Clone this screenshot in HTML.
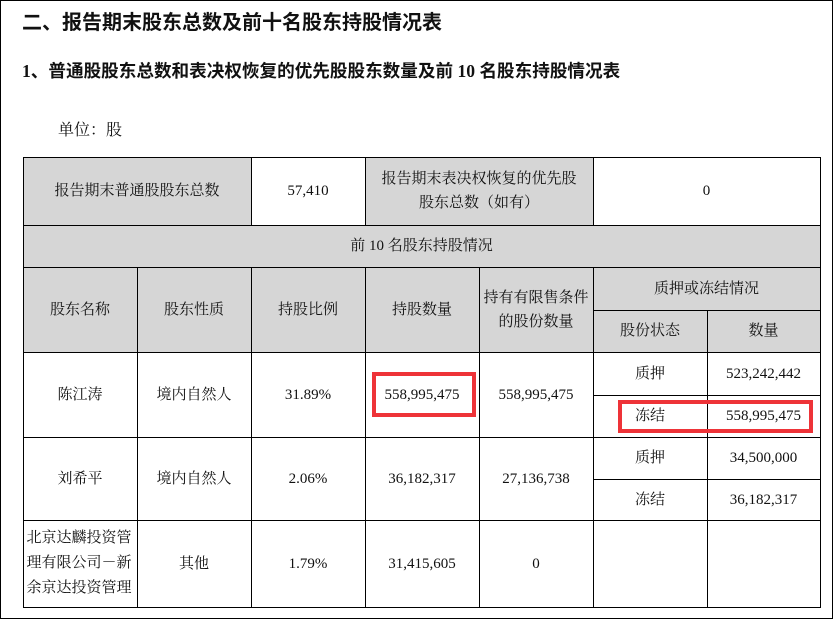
<!DOCTYPE html>
<html><head><meta charset="utf-8"><style>
body{margin:0;width:833px;height:619px;background:#fff;position:relative;overflow:hidden;font-family:"Liberation Serif","Noto Serif CJK SC",serif;color:#111}
.frame{position:absolute;left:0;top:0;width:831px;height:617px;border:1px solid #000}
.c{position:absolute;box-sizing:border-box;border:1px solid #000;display:flex;align-items:center;justify-content:center;text-align:center;font-size:15px;line-height:24px;margin:-0.5px}
.g{background:#d6d6d6}
.t{position:absolute;white-space:nowrap}
.red{position:absolute;border:4px solid #ee3338;box-sizing:border-box}
</style></head><body>
<div class="frame"></div>
<div class="t" style="left:22px;top:6px;font-size:20px;font-weight:bold;font-family:'Liberation Sans','Noto Sans CJK SC',sans-serif">二、报告期末股东总数及前十名股东持股情况表</div>
<div class="t" style="left:22px;top:58px;font-size:17.6px;font-weight:bold;font-family:'Liberation Serif','Noto Sans CJK SC',serif">1、普通股股东总数和表决权恢复的优先股股东数量及前 10 名股东持股情况表</div>
<div class="t" style="left:58px;top:117px;font-size:16px">单位：股</div>

<div class="c g" style="left:23px;top:157px;width:229px;height:69px">报告期末普通股股东总数</div>
<div class="c" style="left:251px;top:157px;width:115px;height:69px">57,410</div>
<div class="c g" style="left:365px;top:157px;width:229px;height:69px;padding:0 10px">报告期末表决权恢复的优先股股东总数（如有）</div>
<div class="c" style="left:593px;top:157px;width:228px;height:69px">0</div>
<div class="c g" style="left:23px;top:225px;width:798px;height:43px">前 10 名股东持股情况</div>

<div class="c g" style="left:23px;top:267px;width:115px;height:86px">股东名称</div>
<div class="c g" style="left:137px;top:267px;width:115px;height:86px">股东性质</div>
<div class="c g" style="left:251px;top:267px;width:115px;height:86px">持股比例</div>
<div class="c g" style="left:365px;top:267px;width:115px;height:86px">持股数量</div>
<div class="c g" style="left:479px;top:267px;width:115px;height:86px;padding:0 2px">持有有限售条件的股份数量</div>
<div class="c g" style="left:593px;top:267px;width:228px;height:44px">质押或冻结情况</div>
<div class="c g" style="left:593px;top:310px;width:115px;height:43px">股份状态</div>
<div class="c g" style="left:707px;top:310px;width:114px;height:43px">数量</div>

<div class="c" style="left:23px;top:352px;width:115px;height:86px">陈江涛</div>
<div class="c" style="left:137px;top:352px;width:115px;height:86px">境内自然人</div>
<div class="c" style="left:251px;top:352px;width:115px;height:86px">31.89%</div>
<div class="c" style="left:365px;top:352px;width:115px;height:86px">558,995,475</div>
<div class="c" style="left:479px;top:352px;width:115px;height:86px">558,995,475</div>
<div class="c" style="left:593px;top:352px;width:115px;height:44px">质押</div>
<div class="c" style="left:707px;top:352px;width:114px;height:44px">523,242,442</div>
<div class="c" style="left:593px;top:395px;width:115px;height:43px">冻结</div>
<div class="c" style="left:707px;top:395px;width:114px;height:43px">558,995,475</div>

<div class="c" style="left:23px;top:437px;width:115px;height:84px">刘希平</div>
<div class="c" style="left:137px;top:437px;width:115px;height:84px">境内自然人</div>
<div class="c" style="left:251px;top:437px;width:115px;height:84px">2.06%</div>
<div class="c" style="left:365px;top:437px;width:115px;height:84px">36,182,317</div>
<div class="c" style="left:479px;top:437px;width:115px;height:84px">27,136,738</div>
<div class="c" style="left:593px;top:437px;width:115px;height:43px">质押</div>
<div class="c" style="left:707px;top:437px;width:114px;height:43px">34,500,000</div>
<div class="c" style="left:593px;top:479px;width:115px;height:42px">冻结</div>
<div class="c" style="left:707px;top:479px;width:114px;height:42px">36,182,317</div>

<div class="c" style="left:23px;top:520px;width:115px;height:88px;justify-content:flex-start;text-align:left;padding-left:3px;font-size:15px;line-height:25px">北京达麟投资管<br>理有限公司－新<br>余京达投资管理</div>
<div class="c" style="left:137px;top:520px;width:115px;height:88px">其他</div>
<div class="c" style="left:251px;top:520px;width:115px;height:88px">1.79%</div>
<div class="c" style="left:365px;top:520px;width:115px;height:88px">31,415,605</div>
<div class="c" style="left:479px;top:520px;width:115px;height:88px">0</div>
<div class="c" style="left:593px;top:520px;width:115px;height:88px"></div>
<div class="c" style="left:707px;top:520px;width:114px;height:88px"></div>

<div class="red" style="left:372px;top:372px;width:104px;height:45px"></div>
<div class="red" style="left:618px;top:400px;width:195px;height:33px"></div>
</body></html>
